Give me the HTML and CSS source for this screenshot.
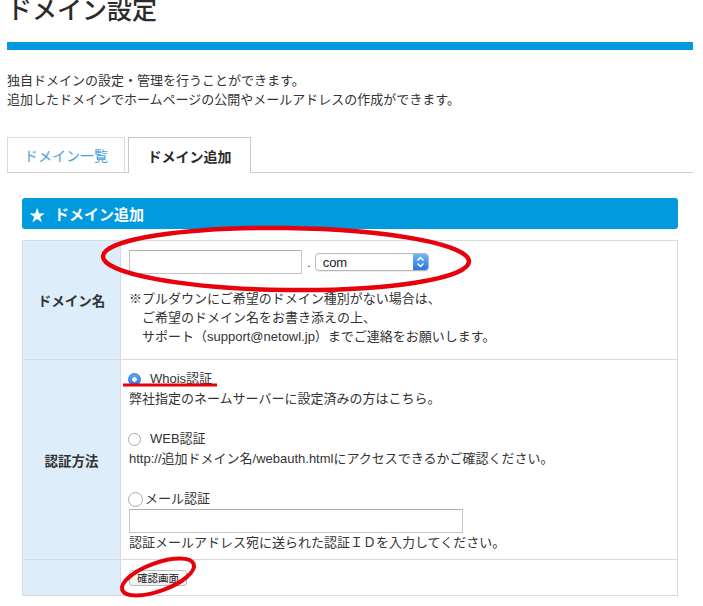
FILE: index.html
```html
<!DOCTYPE html>
<html lang="ja">
<head>
    <meta charset="UTF-8">
    <title>ドメイン設定</title>
    <link rel="stylesheet" href="styles.css">
</head>
<body>
    <div class="page">
        <h1 class="page-title">ドメイン設定</h1>
        <div class="title-bar"></div>

        <p class="lead">独自ドメインの設定・管理を行うことができます。<br>追加したドメインでホームページの公開やメールアドレスの作成ができます。</p>

        <ul class="tabs">
            <li class="tab"><a href="#">ドメイン一覧</a></li>
            <li class="tab active"><a href="#">ドメイン追加</a></li>
        </ul>

        <section class="panel">
            <h2 class="panel-head"><span class="star">★</span>ドメイン追加</h2>

            <table class="form-table">
                <tr class="row-domain">
                    <th>ドメイン名</th>
                    <td>
                        <div class="domain-row">
                            <input type="text" class="text-input domain-input">
                            <span class="dot">.</span>
                            <div class="select">
                                <select>
                                    <option>com</option>
                                    <option>net</option>
                                    <option>jp</option>
                                </select>
                                <span class="select-arrow">
                                    <svg width="15" height="16" viewBox="0 0 15 16">
                                        <path d="M4.5 6.5 L7.5 3.5 L10.5 6.5" fill="none" stroke="#fff" stroke-width="1.5"/>
                                        <path d="M4.5 9.5 L7.5 12.5 L10.5 9.5" fill="none" stroke="#fff" stroke-width="1.5"/>
                                    </svg>
                                </span>
                            </div>
                        </div>
                        <p class="note">※プルダウンにご希望のドメイン種別がない場合は、<br>　ご希望のドメイン名をお書き添えの上、<br>　サポート（support@netowl.jp）までご連絡をお願いします。</p>
                    </td>
                </tr>
                <tr class="row-auth">
                    <th>認証方法</th>
                    <td>
                        <div class="option">
                            <label class="radio-label"><input type="radio" name="auth" class="radio" checked>Whois認証</label>
                            <p class="option-note">弊社指定のネームサーバーに設定済みの方はこちら。</p>
                        </div>
                        <div class="option">
                            <label class="radio-label"><input type="radio" name="auth" class="radio">WEB認証</label>
                            <p class="option-note">http://追加ドメイン名/webauth.htmlにアクセスできるかご確認ください。</p>
                        </div>
                        <div class="option">
                            <label class="radio-label"><input type="radio" name="auth" class="radio radio-mail">メール認証</label>
                            <input type="text" class="text-input mail-input">
                            <p class="option-note">認証メールアドレス宛に送られた認証ＩＤを入力してください。</p>
                        </div>
                    </td>
                </tr>
                <tr class="row-submit">
                    <th></th>
                    <td><button type="button" class="confirm-btn">確認画面</button></td>
                </tr>
            </table>
        </section>
    </div>

    <svg class="marks" width="703" height="606" viewBox="0 0 703 606">
        <ellipse cx="286" cy="259" rx="183" ry="31" transform="rotate(0.8 286 259)" fill="none" stroke="#e8000b" stroke-width="4.5"/>
        <line x1="123" y1="385" x2="217" y2="385" stroke="#e8000b" stroke-width="3"/>
        <ellipse cx="158" cy="577" rx="38" ry="14" transform="rotate(-20 158 577)" fill="none" stroke="#e8000b" stroke-width="4"/>
    </svg>
</body>
</html>
```

FILE: styles.css
```css
* {
    box-sizing: border-box;
}

body {
    margin: 0;
    background: #fff;
    color: #333;
    font-family: "Liberation Sans", "Noto Sans CJK JP", sans-serif;
    font-size: 13px;
}

.page {
    padding: 0 10px 0 7px;
}

.page-title {
    margin: -5px 0 0;
    font-size: 25px;
    line-height: 30px;
    font-weight: 500;
    color: #2b2b2b;
}

.title-bar {
    height: 8px;
    margin-top: 17px;
    background: #019ade;
}

.lead {
    margin: 21px 0 0;
    line-height: 19px;
}

/* tabs */
.tabs {
    display: flex;
    gap: 3px;
    margin: 28px 0 0;
    padding: 0;
    list-style: none;
    border-bottom: 1px solid #cfcfcf;
}

.tab {
    display: flex;
    height: 35px;
    border: 1px solid #dcdcdc;
    border-bottom: none;
}

.tab a {
    display: flex;
    align-items: center;
    justify-content: center;
    width: 116px;
    font-size: 14px;
    color: #4ba3d9;
    text-decoration: none;
}

.tab.active {
    height: 36px;
    margin-bottom: -1px;
    border-color: #c8c8c8;
    background: #fff;
}

.tab.active a {
    width: 121px;
    color: #2b2b2b;
    font-weight: bold;
}

/* panel */
.panel {
    margin: 25px 15px 0;
}

.panel-head {
    display: flex;
    align-items: center;
    height: 31px;
    margin: 0 0 11px;
    padding-left: 7px;
    border-radius: 3px;
    background: #019ade;
    color: #fff;
    font-size: 15px;
    font-weight: bold;
}

.star {
    margin-right: 9px;
    font-size: 16px;
}

.form-table {
    width: 100%;
    border-spacing: 0;
    border-top: 1px solid #dadada;
    border-left: 1px solid #dadada;
}

.form-table th,
.form-table td {
    border-right: 1px solid #dadada;
    border-bottom: 1px solid #dadada;
}

.form-table th {
    width: 98px;
    padding: 0;
    background: #ddeefa;
    font-size: 13.5px;
    font-weight: bold;
    color: #333;
}

.form-table td {
    padding: 8px 8px 13px;
    vertical-align: top;
    line-height: 19px;
}

.text-input {
    height: 24px;
    padding: 2px 4px;
    border: 1px solid #c4c4c4;
    border-top-color: #b0b0b0;
    font: inherit;
}

.domain-row {
    display: flex;
    align-items: center;
}

.domain-input {
    width: 173px;
}

.dot {
    margin: 0 4px 0 5px;
    line-height: 24px;
    padding-top: 2px;
}

.select {
    display: flex;
    width: 114px;
    height: 18px;
    border: 1px solid #b8b8b8;
    border-radius: 4px;
    overflow: hidden;
    background: #fff;
    box-shadow: 0 1px 1px rgba(0, 0, 0, 0.08);
}

.select select {
    flex: 1;
    min-width: 0;
    padding: 0 0 0 7px;
    border: 0;
    background: transparent;
    font: 13px "Liberation Sans", sans-serif;
    color: #222;
    appearance: none;
    -webkit-appearance: none;
}

.select-arrow {
    display: flex;
    width: 15px;
    background: linear-gradient(#73b6f8, #2475e4);
}

.note {
    margin: 14px 0 0;
}

/* auth options */
.row-auth td {
    padding: 9px 8px 6px;
    line-height: 20px;
}

.option + .option {
    margin-top: 20px;
}

.radio-label {
    display: flex;
    align-items: center;
    height: 20px;
}

.radio {
    width: 13px;
    height: 13px;
    margin: 0 9px 0 -1px;
    border: 1px solid #a9a9a9;
    border-radius: 50%;
    background: #fff;
    appearance: none;
    -webkit-appearance: none;
}

.radio:checked {
    border-color: #2f7de0;
    background: radial-gradient(circle, #fff 0 2px, transparent 2.5px), linear-gradient(#5fa6f4, #2c7ce6);
}

.radio-mail {
    width: 15px;
    height: 15px;
    margin-right: 2px;
}

.option-note {
    margin: 0;
}

.mail-input {
    display: block;
    width: 334px;
}

.row-submit td {
    padding: 10px 8px 9px;
}

.confirm-btn {
    display: block;
    height: 16px;
    padding: 0 7px;
    border: 1px solid #bdbdbd;
    border-radius: 3px;
    background: linear-gradient(#fff, #eee);
    font: 10.5px "Noto Sans CJK JP", sans-serif;
    color: #222;
    line-height: 14px;
}

.marks {
    position: absolute;
    top: 0;
    left: 0;
    pointer-events: none;
}
```
